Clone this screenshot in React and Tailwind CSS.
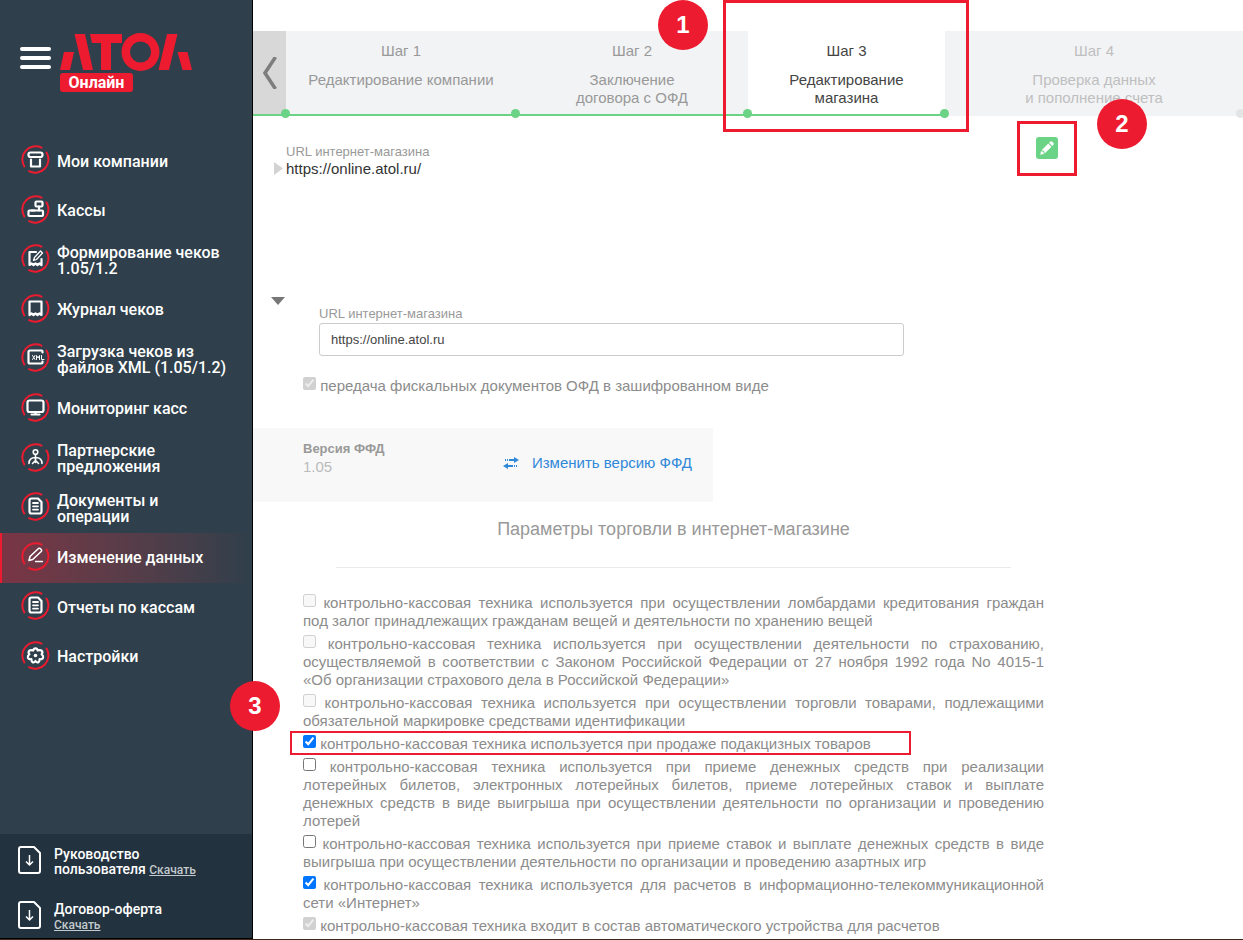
import React, { useState } from 'react';

const menuItems = [
  { id: 'companies', title: 'Мои компании', icon: 'shop' },
  { id: 'kassy', title: 'Кассы', icon: 'kassa' },
  { id: 'create', title: 'Формирование чеков 1.05/1.2', icon: 'receiptEdit' },
  { id: 'journal', title: 'Журнал чеков', icon: 'receipt' },
  { id: 'xml', title: 'Загрузка чеков из файлов XML (1.05/1.2)', icon: 'xml' },
  { id: 'monitoring', title: 'Мониторинг касс', icon: 'monitor' },
  { id: 'partners', title: 'Партнерские предложения', icon: 'partner' },
  { id: 'docs', title: 'Документы и операции', icon: 'doc' },
  { id: 'edit', title: 'Изменение данных', icon: 'pencil', active: true },
  { id: 'reports', title: 'Отчеты по кассам', icon: 'doc' },
  { id: 'settings', title: 'Настройки', icon: 'gear' },
];

const steps = [
  { id: 1, lines: ['Редактирование компании'], state: 'done' },
  { id: 2, lines: ['Заключение', 'договора с ОФД'], state: 'done' },
  { id: 3, lines: ['Редактирование', 'магазина'], state: 'current' },
  { id: 4, lines: ['Проверка данных', 'и пополнение счета'], state: 'next' },
];

const tradeOptions = [
  { id: 'pawn', text: 'контрольно-кассовая техника используется при осуществлении ломбардами кредитования граждан под залог принадлежащих гражданам вещей и деятельности по хранению вещей', disabled: true },
  { id: 'insurance', text: 'контрольно-кассовая техника используется при осуществлении деятельности по страхованию, осуществляемой в соответствии с Законом Российской Федерации от 27 ноября 1992 года No 4015-1 «Об организации страхового дела в Российской Федерации»', disabled: true },
  { id: 'marking', text: 'контрольно-кассовая техника используется при осуществлении торговли товарами, подлежащими обязательной маркировке средствами идентификации', disabled: true },
  { id: 'excise', text: 'контрольно-кассовая техника используется при продаже подакцизных товаров', checked: true, marked: true },
  { id: 'lottery', text: 'контрольно-кассовая техника используется при приеме денежных средств при реализации лотерейных билетов, электронных лотерейных билетов, приеме лотерейных ставок и выплате денежных\u00a0средств в виде выигрыша при осуществлении деятельности по организации и проведению лотерей' },
  { id: 'gambling', text: 'контрольно-кассовая техника используется при приеме ставок и выплате денежных средств в виде выигрыша при осуществлении деятельности по организации и проведению азартных игр' },
  { id: 'internet', text: 'контрольно-кассовая техника используется для расчетов в информационно-телекоммуникационной сети «Интернет»', checked: true },
  { id: 'vending', text: 'контрольно-кассовая техника входит в состав автоматического устройства для расчетов', checked: true, disabled: true },
];

const glyphs = {
  shop: (
    <>
      <rect x="7.5" y="7.5" width="14" height="4.500" rx="2" />
      <path d="M10 14.500v7h9v-7" />
    </>
  ),
  kassa: (
    <>
      <rect x="14.500" y="6.500" width="7" height="5" rx="1" />
      <path d="M18 11.500v4M10.500 15.500h3" />
      <rect x="7.500" y="15.500" width="14.500" height="5.500" rx="1" />
    </>
  ),
  receiptEdit: (
    <>
      <path d="M15 8H8.500v13l2-1.500 2 1.500 2-1.500 2 1.500 2-1.500 2 1.500v-6" />
      <path d="M12.500 16.500l1-3 6-6.500 2 2-6 6.500z" strokeWidth="1.300" />
    </>
  ),
  receipt: <path d="M8.500 7.500h12v13.500l-2-1.500-2 1.500-2-1.500-2 1.500-2-1.500-2 1.500z" />,
  xml: (
    <>
      <path d="M21.500 9.500v-1q0-1-1-1h-11.500q-1.500 0-1.500 1.500v10q0 1.500 1.500 1.500h11.500q1 0 1-1v-1" />
      <path d="M11.500 12.500l2.500 4M14 12.500l-2.500 4M15.500 16.500v-4l1.500 2.500 1.500-2.500v4M20.500 12.500v4h2.500" strokeWidth="1" />
    </>
  ),
  monitor: (
    <>
      <rect x="6.500" y="7.500" width="16" height="11.500" rx="2" />
      <path d="M14.500 19v2.500M10.500 21.500h8" />
    </>
  ),
  partner: (
    <>
      <circle cx="14.500" cy="9" r="2.300" strokeWidth="1.600" />
      <path d="M14.500 11.500v8M8 20.500c0-4 2.500-6 6.500-6s6.500 2 6.500 6M11.500 20.500l3-3 3 3" strokeWidth="1.600" />
    </>
  ),
  doc: (
    <>
      <path d="M10.500 6.500h6.500l3.500 3.500v9.500q0 2-2 2h-8q-2 0-2-2v-11q0-2 2-2z" />
      <path d="M12 11h5M12 14.300h5M12 17.600h5" strokeWidth="1.800" />
    </>
  ),
  pencil: (
    <>
      <path d="M8 18.500l1-4 8.500-8q1-.7 2 .3l.7.7q1 1 0 2l-8.500 8z" strokeWidth="1.600" />
      <path d="M14.500 19.500h7" strokeWidth="1.300" />
    </>
  ),
  gear: (
    <>
      <path d="M14.500 7.300q1.800 0 2.200 2.200 2.300-.8 3.700 0 2 1.500.2 3.900 1.900 1.300 1.500 2.900-.7 2.200-3.500 1.900 0 2.600-1.500 3.200-1.400.4-2.600-1.400-1.200 1.800-2.600 1.400-1.500-.6-1.500-3.200-2.800.3-3.500-1.900-.4-1.600 1.500-2.900-1.800-2.400.2-3.900 1.400-.8 3.700 0 .4-2.200 2.200-2.200z" />
      <circle cx="14.500" cy="14.500" r="1.800" fill="currentColor" stroke="none" />
    </>
  ),
};

function MenuIcon({ name }) {
  return (
    <svg className="w-[29px] h-[29px] mb-1 shrink-0 text-white" viewBox="0 0 29 29" fill="none" strokeLinecap="round" strokeLinejoin="round" aria-hidden="true">
      {/* broken ring */}
      <path d="M3.300 21.500A13.300 13.300 0 0 1 20.500 2.600M25.500 7.500A13.300 13.300 0 0 1 8 26.200" stroke="#ed1b2f" strokeWidth="2" />
      <g stroke="currentColor" strokeWidth="2.200">{glyphs[name]}</g>
    </svg>
  );
}

function Logo() {
  return (
    <div>
      <svg className="block w-[132px] h-[38px]" viewBox="0 0 132 38" fill="#ed1b2f" role="img" aria-label="АТОЛ">
        <path d="M4 19h10l-4 18H0zM14.500 1h10.500l8 36H23z" />
        <path d="M30 1h32v9H51v27H41V10H32z" />
        <path fillRule="evenodd" d="M80.500 0a19 19 0 1 1 0 38 19 19 0 0 1 0-38zm0 8.500a10.500 10.500 0 1 0 0 21 10.500 10.500 0 0 0 0-21z" />
        <path d="M107 1h10.500l-8.500 36H98.500zM117.500 19h10l4.500 18h-9.500z" />
      </svg>
      <span className="mt-[2px] block w-[73px] rounded-[3px] bg-[#ed1b2f] text-center text-base leading-[19px] font-bold text-white">
        Онлайн
      </span>
    </div>
  );
}

function DownloadIcon() {
  return (
    <svg className="w-6 h-7 shrink-0" viewBox="0 0 24 28" fill="none" stroke="#fff" strokeLinejoin="round" aria-hidden="true">
      <path d="M3 1h13l6 6v18q0 2-2 2H3q-2 0-2-2V3q0-2 2-2z" strokeWidth="2" />
      <path d="M11.500 9v10M8 15.500l3.500 3.500 3.500-3.500" strokeWidth="1.500" />
    </svg>
  );
}

function Marker({ children, className }) {
  return (
    <span className={`absolute z-20 flex h-[50px] w-[50px] items-center justify-center rounded-full bg-[#ed1b2f] text-2xl font-bold text-white ${className}`}>
      {children}
    </span>
  );
}

function Sidebar() {
  return (
    <aside className="flex w-[253px] shrink-0 flex-col border-r border-b border-black bg-[#2f3f4b] font-[Roboto,sans-serif] text-white">
      <div className="flex items-start gap-[9px] pt-[33px] pl-5">
        <button type="button" aria-label="Меню" className="mt-[14px] flex w-[31px] flex-col gap-[5px]">
          <span className="h-1 w-full rounded-full bg-white" />
          <span className="h-1 w-full rounded-full bg-white" />
          <span className="h-1 w-full rounded-full bg-white" />
        </button>
        <Logo />
      </div>

      <nav className="mt-[45px]">
        <ul className="grid h-[545px] auto-rows-fr">
          {menuItems.map((item) => (
            <li key={item.id}>
              <a
                href="#"
                className={`flex h-full items-center gap-[7px] border-l-2 pr-5 pl-[19px] ${item.active ? 'border-[#ed1b2f] bg-linear-to-r from-[#7a3545] to-[#2f3f4b]' : 'border-transparent'}`}
              >
                <MenuIcon name={item.icon} />
                <span className="text-base leading-4 font-medium">{item.title}</span>
              </a>
            </li>
          ))}
        </ul>
      </nav>

      <div className="mt-auto flex flex-col gap-[23px] bg-[#22323e] pt-3 pb-[5px] pl-[18px] text-sm leading-[15px] font-medium">
        <div className="flex items-start gap-3">
          <DownloadIcon />
          <p className="pt-px">
            Руководство<br />пользователя{' '}
            <a href="#" className="text-xs leading-[15px] text-[#c3c9cd] underline">Скачать</a>
          </p>
        </div>
        <div className="flex items-start gap-3">
          <DownloadIcon />
          <p className="pt-px">
            Договор-оферта<br />
            <a href="#" className="text-xs leading-[15px] text-[#c3c9cd] underline">Скачать</a>
          </p>
        </div>
      </div>
    </aside>
  );
}

function Step({ step }) {
  const colors = {
    done: 'bg-[#f2f3f5] text-[#999999] border-[#6bd385]',
    current: 'bg-white text-[#444444] border-[#6bd385]',
    next: 'bg-[#f2f3f5] text-[#bfbfbf] border-transparent',
  };
  return (
    <li className={`relative border-b-2 pt-[11px] text-center leading-[18px] ${colors[step.state]}`}>
      <p>Шаг {step.id}</p>
      <p className="mt-[11px]">
        {step.lines.map((line) => (
          <span key={line} className="block">{line}</span>
        ))}
      </p>
      <span className={`absolute -bottom-1 z-10 h-[9px] w-[9px] rounded-full ${step.state === 'next' ? '-right-0.5 bg-[#e2e4e5]' : '-right-1 bg-[#6bd385]'}`} />
      {step.state === 'current' && (
        <>
          <span className="pointer-events-none absolute -top-[31px] -right-6 -bottom-[18px] -left-[25px] z-10 border-3 border-[#ed1b2f]" />
          <Marker className="-top-[31px] -left-[90px]">1</Marker>
        </>
      )}
    </li>
  );
}

function TradeOption({ option }) {
  const [checked, setChecked] = useState(Boolean(option.checked));
  return (
    <li className="relative">
      <label className="block text-justify">
        <input
          type="checkbox"
          className="h-[13px] w-[13px] align-[1px]"
          checked={checked}
          disabled={option.disabled}
          onChange={(e) => setChecked(e.target.checked)}
        />{' '}
        {option.text}
      </label>
      {option.marked && (
        <>
          <span className="pointer-events-none absolute -top-1 -left-[13px] h-6 w-[621px] border-2 border-[#ed1b2f]" />
          <Marker className="-top-[54px] -left-[73px]">3</Marker>
        </>
      )}
    </li>
  );
}

export default function App() {
  const [url, setUrl] = useState('https://online.atol.ru');

  return (
    <div className="flex min-h-screen overflow-hidden border-b border-[#3b2a1c] bg-white font-['Liberation_Sans',Arial,sans-serif] text-[15px] leading-[18px] text-[#8c8c8c]">
      <Sidebar />

      <main className="min-w-0 flex-1 pt-[31px]">
        <ol className="grid h-[85px] grid-cols-[33px_230fr_232fr_197fr_298fr]">
          <li className="relative border-b-2 border-[#6bd385] bg-[#d8d8d8]">
            <button type="button" aria-label="Назад" className="flex h-full w-full items-center justify-center">
              <svg className="h-8 w-[14px]" viewBox="0 0 14 32" fill="none" stroke="#7d7d7d" strokeWidth="3.500" aria-hidden="true">
                <path d="M12.500 0L2 16l10.500 16" />
              </svg>
            </button>
            <span className="absolute -right-1 -bottom-1 z-10 h-[9px] w-[9px] rounded-full bg-[#6bd385]" />
          </li>
          {steps.map((step) => <Step key={step.id} step={step} />)}
        </ol>

        <section className="flex items-start pt-[5px] pl-[21px]">
          <svg className="mt-[41px] mr-[3px] h-[13px] w-[9px]" viewBox="0 0 9 13" fill="#d3d3d3" aria-hidden="true">
            <path d="M0 0l9 6.500L0 13z" />
          </svg>
          <div className="w-[731px] pt-[22px]">
            <p className="text-[13px] leading-[17px] text-[#999999]">URL интернет-магазина</p>
            <p className="text-[#333333]">https://online.atol.ru/</p>
          </div>
          <div className="relative border-3 border-[#ed1b2f] px-4 pt-[13px] pb-[14px]">
            <button type="button" aria-label="Редактировать" className="flex h-[22px] w-[22px] items-center justify-center rounded-[3px] bg-[#6bd385] text-white">
              <svg className="h-[14px] w-[14px]" viewBox="0 0 14 14" fill="currentColor" aria-hidden="true">
                <path d="M10.300.6q.8-.8 1.700 0l1.400 1.400q.8.900 0 1.700l-1.200 1.200-3.100-3.100z" />
                <path d="M8.300 2.600l3.100 3.100-6.700 6.700-.4-1.800-.9-.9-1.800-.4z" />
                <path d="M1 10.200l1.600.3.900.9.300 1.600L.3 13.700z" />
              </svg>
            </button>
            <Marker className="-top-[25px] left-[77px]">2</Marker>
          </div>
        </section>

        <section className="mt-[118px] flex items-start pl-[18px]">
          <svg className="mt-px h-2 w-[14px]" viewBox="0 0 14 8" fill="#777777" aria-hidden="true">
            <path d="M0 0h14L7 8z" />
          </svg>
          <div className="ml-[34px] w-[585px] pt-[9px]">
            <label htmlFor="shop-url" className="block text-[13px] text-[#999999]">URL интернет-магазина</label>
            <input
              id="shop-url"
              type="text"
              value={url}
              onChange={(e) => setUrl(e.target.value)}
              className="block h-[33px] w-full rounded-[3px] border border-[#cccccc] px-[11px] text-[13px] text-[#444444]"
            />
          </div>
        </section>

        <div className="mt-[21px] pl-[50px]">
          <label>
            <input type="checkbox" checked disabled readOnly className="h-[13px] w-[13px] align-[1px]" />{' '}
            передача фискальных документов ОФД в зашифрованном виде
          </label>
        </div>

        <section className="mt-[33px] flex h-[74px] w-[460px] items-start justify-between bg-[#f8f8f8] pt-3 pr-[21px] pl-[50px]">
          <div>
            <p className="text-[13px] font-bold text-[#999999]">Версия ФФД</p>
            <p className="text-[#bbbbbb]">1.05</p>
          </div>
          <a href="#" className="flex items-center gap-[13px] pt-[14px] text-[#2f88d8]">
            <svg className="h-3 w-4" viewBox="0 0 16 12" fill="currentColor" aria-hidden="true">
              <path d="M2 2h1v2H2zM4 2h1v2H4zM6 2h5V0l5 3-5 3V4H6z" />
              <path d="M14 8h-1v2h1zM12 8h-1v2h1zM10 8H5V6L0 9l5 3v-2h5z" />
            </svg>
            <span>Изменить версию ФФД</span>
          </a>
        </section>

        <section className="mt-[17px] ml-[50px] w-[741px]">
          <h2 className="text-center text-lg leading-5 text-[#999999]">Параметры торговли в интернет-магазине</h2>
          <hr className="mx-[33px] mt-7 border-[#eaeaea]" />
          <ul className="mt-[26px] flex flex-col gap-[5px]">
            {tradeOptions.map((option) => <TradeOption key={option.id} option={option} />)}
          </ul>
        </section>
      </main>
    </div>
  );
}
